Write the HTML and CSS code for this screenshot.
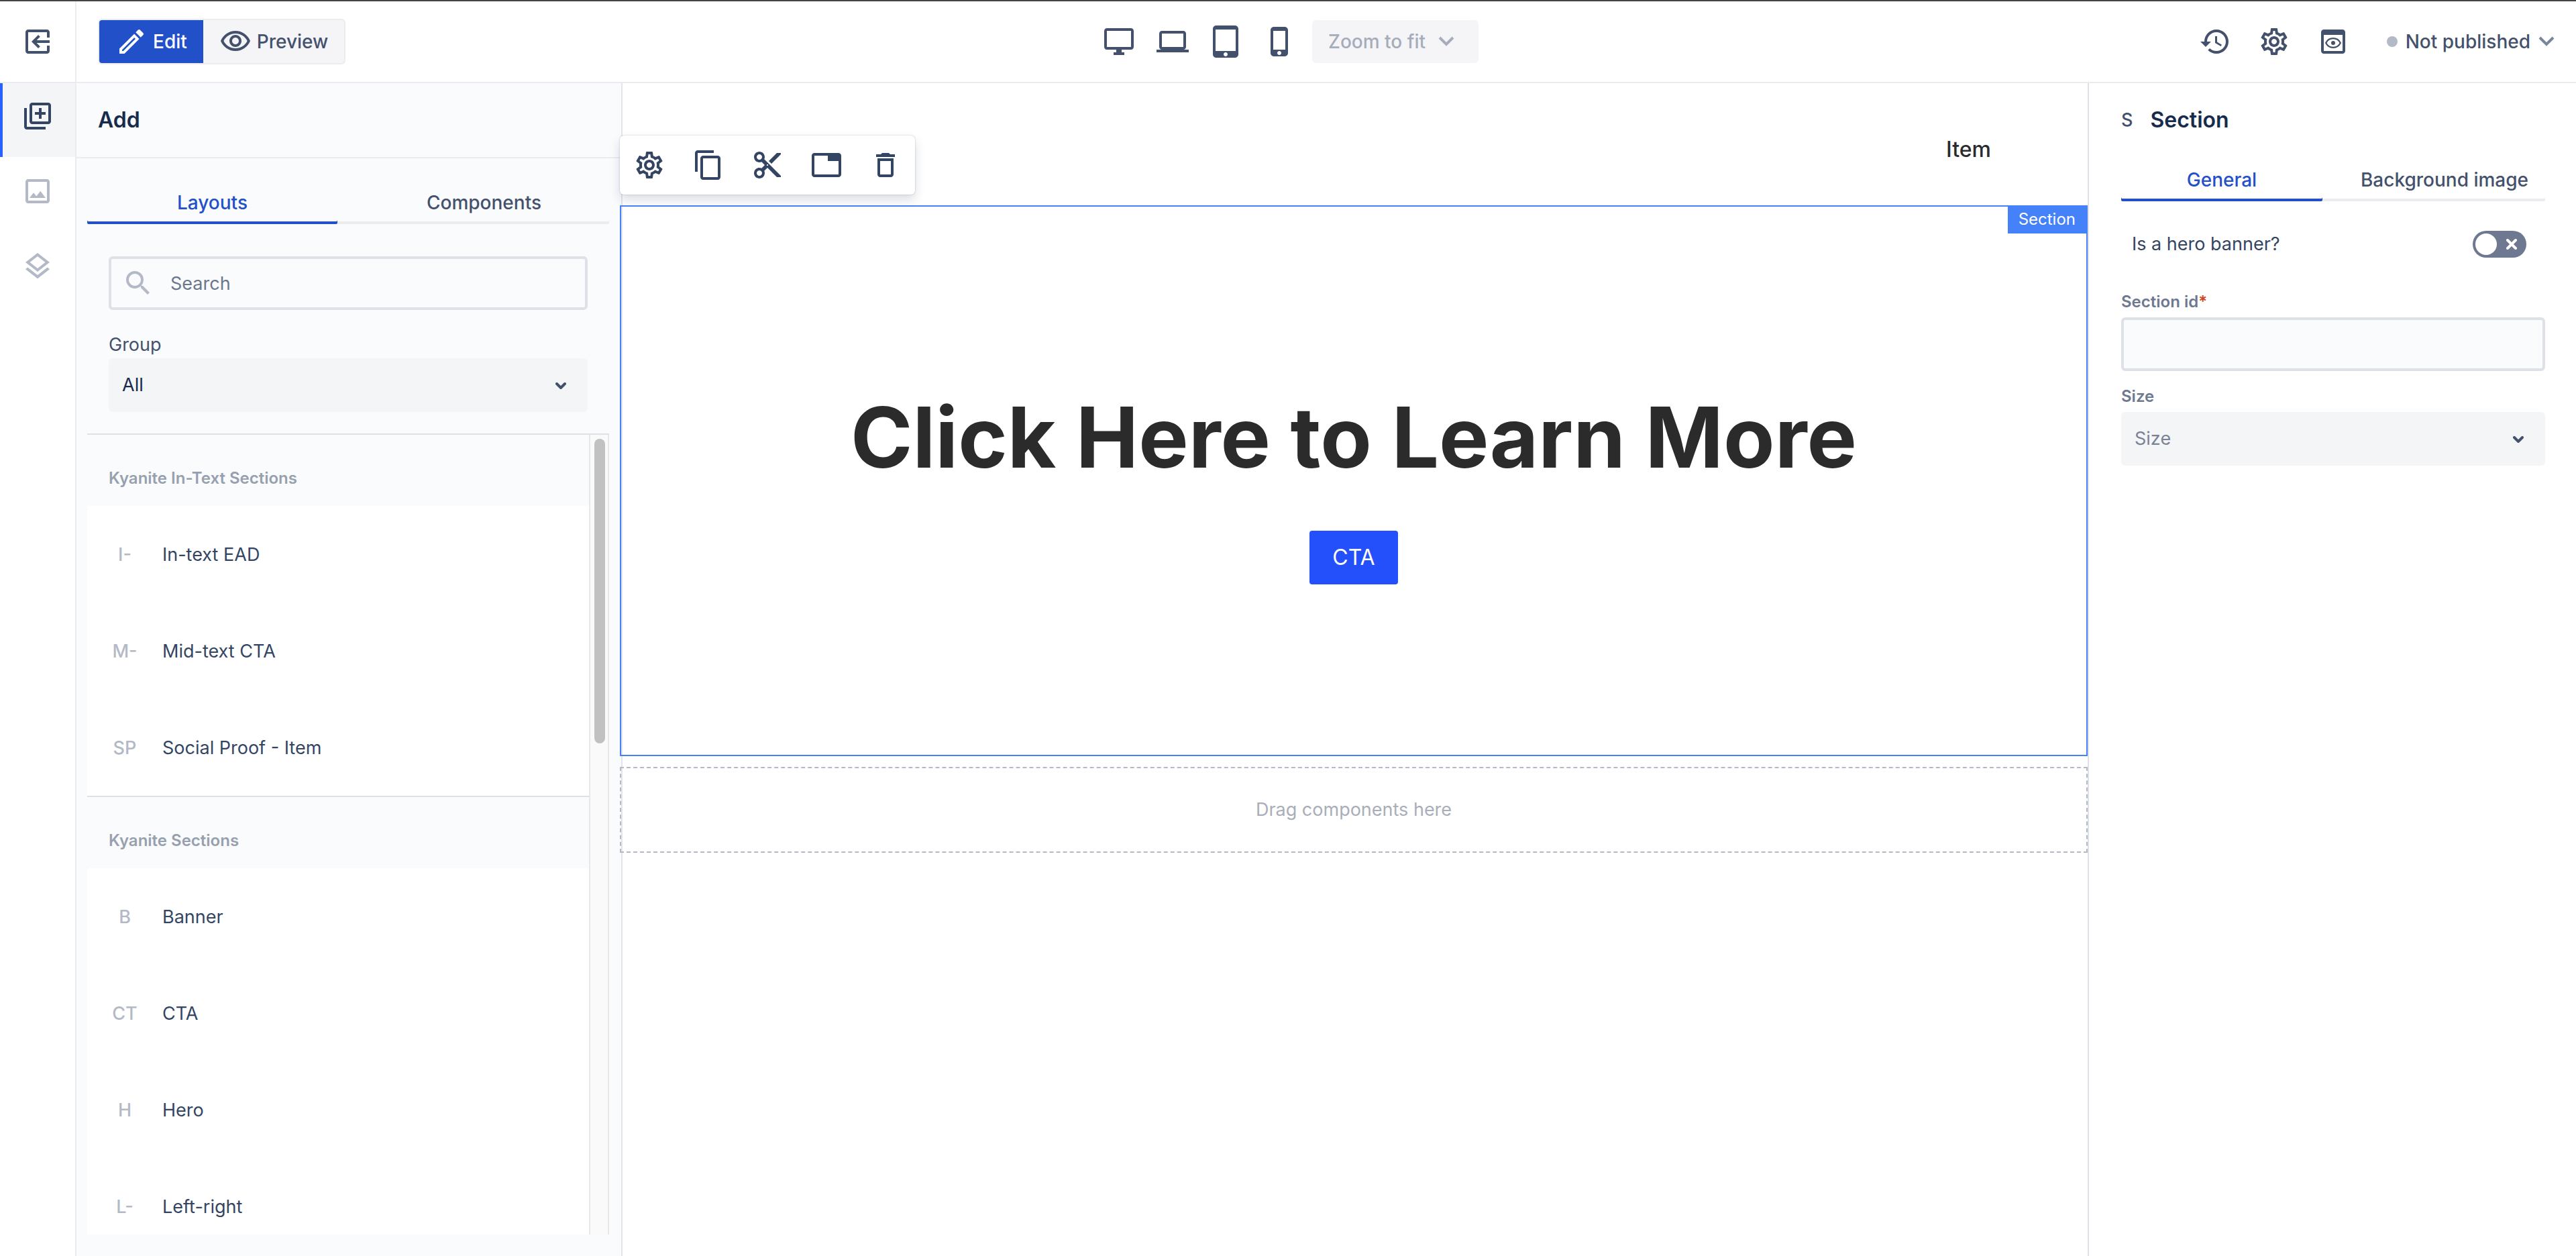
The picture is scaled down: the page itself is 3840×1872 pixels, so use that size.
FILE: index.html
```html
<!DOCTYPE html>
<html lang="en">
<head>
<meta charset="utf-8">
<meta name="viewport" content="width=device-width, initial-scale=1">
<title>Page editor</title>
<link rel="stylesheet" href="styles.css">
</head>
<body>
<svg class="sprite" aria-hidden="true">
  <symbol id="gear" viewBox="0 0 24 24"><path d="M19.43 12.98c.04-.32.07-.64.07-.98 0-.34-.03-.66-.07-.98l2.11-1.65c.19-.15.24-.42.12-.64l-2-3.46c-.09-.16-.26-.25-.44-.25-.06 0-.12.01-.17.03l-2.49 1c-.52-.4-1.08-.73-1.69-.98l-.38-2.65C14.46 2.18 14.25 2 14 2h-4c-.25 0-.46.18-.49.42l-.38 2.65c-.61.25-1.17.59-1.69.98l-2.49-1c-.06-.02-.12-.03-.18-.03-.17 0-.34.09-.43.25l-2 3.46c-.13.22-.07.49.12.64l2.11 1.65c-.04.32-.07.65-.07.98 0 .33.03.66.07.98l-2.11 1.65c-.19.15-.24.42-.12.64l2 3.46c.09.16.26.25.44.25.06 0 .12-.01.17-.03l2.49-1c.52.4 1.08.73 1.69.98l.38 2.65c.03.24.24.42.49.42h4c.25 0 .46-.18.49-.42l.38-2.65c.61-.25 1.17-.59 1.69-.98l2.49 1c.06.02.12.03.18.03.17 0 .34-.09.43-.25l2-3.46c.12-.22.07-.49-.12-.64l-2.11-1.65zm-1.98-1.71c.04.31.05.52.05.73 0 .21-.02.43-.05.73l-.14 1.13.89.7 1.08.84-.7 1.21-1.27-.51-1.04-.42-.9.68c-.43.32-.84.56-1.25.73l-1.06.43-.16 1.13-.2 1.35h-1.4l-.19-1.35-.16-1.13-1.06-.43c-.43-.18-.83-.41-1.23-.71l-.91-.7-1.06.43-1.27.51-.7-1.21 1.08-.84.89-.7-.14-1.13c-.03-.31-.05-.54-.05-.74s.02-.43.05-.73l.14-1.13-.89-.7-1.08-.84.7-1.21 1.27.51 1.04.42.9-.68c.43-.32.84-.56 1.25-.73l1.06-.43.16-1.13.2-1.35h1.39l.19 1.35.16 1.13 1.06.43c.43.18.83.41 1.23.71l.91.7 1.06-.43 1.27-.51.7 1.21-1.07.85-.89.7.14 1.13zM12 8c-2.21 0-4 1.79-4 4s1.79 4 4 4 4-1.79 4-4-1.79-4-4-4zm0 6c-1.1 0-2-.9-2-2s.9-2 2-2 2 .9 2 2-.9 2-2 2z"/></symbol>
  <symbol id="chevron" viewBox="0 0 24 16"><path d="M2 2l10 10L22 2" fill="none" stroke="currentColor" stroke-width="4"/></symbol>
  <symbol id="caret" viewBox="0 0 16 10"><path d="M2 2l6 6 6-6" fill="none" stroke="currentColor" stroke-width="4" stroke-linecap="round" stroke-linejoin="round"/></symbol>
</svg>

<header class="topbar">
  <div class="topbar-left">
    <button class="exit" type="button" aria-label="Exit">
      <svg class="icon" viewBox="0 0 24 24"><g transform="matrix(-1 0 0 1 24 0)"><path d="M10.09 15.59L11.5 17l5-5-5-5-1.41 1.41L12.67 11H3v2h9.67l-2.58 2.59zM19 3H5c-1.11 0-2 .9-2 2v4h2V5h14v14H5v-4H3v4c0 1.1.89 2 2 2h14c1.1 0 2-.9 2-2V5c0-1.1-.9-2-2-2z"/></g></svg>
    </button>
    <div class="mode">
      <button class="mode-button mode-edit" type="button">
        <svg class="icon" viewBox="0 0 24 24"><path d="M14.06 9.02l.92.92L5.92 19H5v-.92l9.06-9.06M17.66 3c-.25 0-.51.1-.7.29l-1.83 1.83 3.75 3.75 1.83-1.83c.39-.39.39-1.02 0-1.41l-2.34-2.34c-.2-.2-.45-.29-.71-.29zm-3.6 3.19L3 17.25V21h3.75L17.81 9.94l-3.75-3.75z"/></svg>
        <span>Edit</span>
      </button>
      <button class="mode-button mode-preview" type="button">
        <svg class="icon" viewBox="0 0 24 24"><path d="M12 6c3.79 0 7.17 2.13 8.82 5.5C19.17 14.87 15.79 17 12 17s-7.17-2.13-8.82-5.5C4.83 8.13 8.21 6 12 6m0-2C7 4 2.73 7.11 1 11.5 2.73 15.89 7 19 12 19s9.27-3.11 11-7.5C21.27 7.11 17 4 12 4zm0 5c1.38 0 2.5 1.12 2.5 2.5S13.38 14 12 14s-2.5-1.12-2.5-2.5S10.62 9 12 9m0-2c-2.48 0-4.5 2.02-4.5 4.5S9.52 16 12 16s4.5-2.02 4.5-4.5S14.48 7 12 7z"/></svg>
        <span>Preview</span>
      </button>
    </div>
  </div>

  <div class="devices">
    <button type="button" aria-label="Desktop"><svg class="icon" viewBox="0 0 24 24"><path d="M21 2H3c-1.1 0-2 .9-2 2v12c0 1.1.9 2 2 2h7v2H8v2h8v-2h-2v-2h7c1.1 0 2-.9 2-2V4c0-1.1-.9-2-2-2zm0 14H3V4h18v12z"/></svg></button>
    <button type="button" aria-label="Laptop"><svg class="icon" viewBox="0 0 24 24"><path d="M20 18c1.1 0 1.99-.9 1.99-2L22 6c0-1.1-.9-2-2-2H4c-1.1 0-2 .9-2 2v10c0 1.1.9 2 2 2H0v2h24v-2h-4zM4 6h16v10H4V6z"/></svg></button>
    <button type="button" aria-label="Tablet"><svg class="icon" viewBox="0 0 24 24"><path d="M18.5 0h-14C3.12 0 2 1.12 2 2.500v19C2 22.880 3.120 24 4.500 24h14c1.380 0 2.500-1.120 2.500-2.500v-19C21 1.120 19.880 0 18.500 0zm-7 23c-.83 0-1.500-.67-1.500-1.500s.67-1.500 1.500-1.500 1.500.67 1.500 1.500-.67 1.500-1.500 1.500zm7.500-4H4V3h15v16z"/></svg></button>
    <button type="button" aria-label="Phone"><svg class="icon" viewBox="0 0 24 24"><path d="M15.500 1h-8C6.120 1 5 2.120 5 3.500v17C5 21.880 6.120 23 7.500 23h8c1.380 0 2.500-1.120 2.500-2.500v-17C18 2.120 16.880 1 15.500 1zm-4 21c-.83 0-1.500-.67-1.500-1.500s.67-1.500 1.500-1.500 1.500.67 1.500 1.500-.67 1.500-1.500 1.500zm4.500-4H7V4h9v14z"/></svg></button>
    <button class="zoom" type="button" disabled><span>Zoom to fit</span><svg class="chevron"><use href="#chevron"/></svg></button>
  </div>

  <div class="topbar-right">
    <button type="button" aria-label="History"><svg class="icon" viewBox="0 0 24 24"><path d="M13 3c-4.970 0-9 4.030-9 9H1l3.890 3.890.07.14L9 12H6c0-3.870 3.130-7 7-7s7 3.130 7 7-3.130 7-7 7c-1.930 0-3.680-.79-4.940-2.060l-1.420 1.420C8.270 19.990 10.510 21 13 21c4.970 0 9-4.030 9-9s-4.030-9-9-9zm-1 5v5l4.280 2.540.72-1.210-3.500-2.080V8H12z"/></svg></button>
    <button type="button" aria-label="Settings"><svg class="icon"><use href="#gear"/></svg></button>
    <button type="button" aria-label="View page"><svg class="icon" viewBox="0 0 24 24"><path fill-rule="evenodd" d="M19 3H5c-1.110 0-2 .9-2 2v14c0 1.100.89 2 2 2h14c1.100 0 2-.9 2-2V5c0-1.100-.89-2-2-2zm0 16H5V7h14v12z"/><circle cx="12" cy="13" r="1.5"/><path d="M6.600 13c1-2 3-3.400 5.400-3.400s4.400 1.400 5.400 3.400c-1 2-3 3.400-5.400 3.400S7.600 15 6.600 13z" fill="none" stroke="currentColor" stroke-width="1.100"/></svg></button>
    <button class="status" type="button"><span class="dot"></span><span>Not published</span><svg class="chevron"><use href="#chevron"/></svg></button>
  </div>
</header>

<div class="workspace">
  <nav class="rail" aria-label="Tools">
    <button class="rail-button rail-active" type="button" aria-label="Add"><svg class="icon" viewBox="0 0 24 24"><path d="M4 6H2v14c0 1.100.9 2 2 2h14v-2H4V6zm16-4H8c-1.100 0-2 .9-2 2v12c0 1.100.9 2 2 2h12c1.100 0 2-.9 2-2V4c0-1.100-.9-2-2-2zm0 14H8V4h12v12zm-7-2h2v-3h3V9h-3V6h-2v3h-3v2h3z"/></svg></button>
    <button class="rail-button" type="button" aria-label="Assets"><svg class="icon" viewBox="0 0 24 24"><path d="M19 5v14H5V5h14m0-2H5c-1.100 0-2 .9-2 2v14c0 1.100.9 2 2 2h14c1.100 0 2-.9 2-2V5c0-1.100-.9-2-2-2zm-4.860 8.860l-3 3.870L9 13.140 6 17h12l-3.860-5.140z"/></svg></button>
    <button class="rail-button" type="button" aria-label="Layers"><svg class="icon" viewBox="0 0 24 24"><path d="M11.990 18.540l-7.370-5.730L3 14.070l9 7 9-7-1.630-1.270-7.380 5.740zM12 16l7.360-5.730L21 9l-9-7-9 7 1.630 1.270L12 16zm0-11.470L17.740 9 12 13.470 6.260 9 12 4.530z"/></svg></button>
  </nav>

  <aside class="library">
    <h2 class="library-title">Add</h2>
    <div class="library-body">
      <div class="tabs" role="tablist">
        <button class="tab tab-active" role="tab" type="button" aria-selected="true">Layouts</button>
        <button class="tab" role="tab" type="button" aria-selected="false">Components</button>
      </div>
      <div class="filters">
        <label class="search">
          <svg class="icon" viewBox="0 0 24 24"><path d="M15.500 14h-.79l-.28-.27A6.471 6.471 0 0 0 16 9.500 6.500 6.500 0 1 0 9.500 16c1.610 0 3.090-.59 4.230-1.570l.27.28v.79l5 4.990L20.490 19l-4.990-5zm-6 0C7.010 14 5 11.990 5 9.500S7.010 5 9.500 5 14 7.010 14 9.500 11.990 14 9.500 14z"/></svg>
          <input type="text" placeholder="Search" aria-label="Search">
        </label>
        <label class="group-label" for="group">Group</label>
        <div class="select">
          <select id="group"><option>All</option></select>
          <svg class="caret"><use href="#caret"/></svg>
        </div>
      </div>
      <div class="scroller">
        <div class="catalog">
          <section class="catalog-group">
            <h3>Kyanite In-Text Sections</h3>
            <ul>
              <li><span class="initials">I-</span>In-text EAD</li>
              <li><span class="initials">M-</span>Mid-text CTA</li>
              <li><span class="initials">SP</span>Social Proof - Item</li>
            </ul>
          </section>
          <section class="catalog-group">
            <h3>Kyanite Sections</h3>
            <ul>
              <li><span class="initials">B</span>Banner</li>
              <li><span class="initials">CT</span>CTA</li>
              <li><span class="initials">H</span>Hero</li>
              <li><span class="initials">L-</span>Left-right</li>
            </ul>
          </section>
        </div>
        <div class="track"><div class="thumb"></div></div>
      </div>
    </div>
  </aside>

  <main class="canvas">
    <div class="site-nav"><a href="#item">Item</a></div>
    <div class="toolbar" role="toolbar" aria-label="Section actions">
      <button type="button" aria-label="Settings"><svg class="icon"><use href="#gear"/></svg></button>
      <button type="button" aria-label="Copy"><svg class="icon" viewBox="0 0 24 24"><path d="M16 1H4c-1.100 0-2 .9-2 2v14h2V3h12V1zm3 4H8c-1.100 0-2 .9-2 2v14c0 1.100.9 2 2 2h11c1.100 0 2-.9 2-2V7c0-1.100-.9-2-2-2zm0 16H8V7h11v14z"/></svg></button>
      <button type="button" aria-label="Cut"><svg class="icon" viewBox="0 0 24 24"><path d="M9.640 7.640c.23-.5.36-1.050.36-1.640 0-2.210-1.790-4-4-4S2 3.790 2 6s1.790 4 4 4c.59 0 1.140-.13 1.640-.36L10 12l-2.360 2.360C7.140 14.130 6.590 14 6 14c-2.210 0-4 1.790-4 4s1.790 4 4 4 4-1.790 4-4c0-.59-.13-1.140-.36-1.640L12 14l7 7h3v-1L9.640 7.640zM6 8c-1.100 0-2-.89-2-2s.9-2 2-2 2 .89 2 2-.9 2-2 2zm0 12c-1.100 0-2-.89-2-2s.9-2 2-2 2 .89 2 2-.9 2-2 2zm6-7.500c-.28 0-.5-.22-.5-.5s.22-.5.5-.5.5.22.5.5-.22.5-.5.5zM19 3l-6 6 2 2 7-7V3z"/></svg></button>
      <button type="button" aria-label="Placeholder"><svg class="icon" viewBox="0 0 24 24"><path d="M21 3H3c-1.100 0-2 .9-2 2v14c0 1.100.9 2 2 2h18c1.100 0 2-.9 2-2V5c0-1.100-.9-2-2-2zm0 16H3V5h10v4h8v10z"/></svg></button>
      <button type="button" aria-label="Delete"><svg class="icon" viewBox="0 0 24 24"><path d="M6 19c0 1.100.9 2 2 2h8c1.100 0 2-.9 2-2V7H6v12zM8 9h8v10H8V9zm7.500-5l-1-1h-5l-1 1H5v2h14V4h-3.500z"/></svg></button>
    </div>
    <section class="selected">
      <span class="tag">Section</span>
      <h1>Click Here to Learn More</h1>
      <a class="cta" href="#cta">CTA</a>
    </section>
    <div class="dropzone">Drag components here</div>
  </main>

  <aside class="properties">
    <h2 class="properties-title"><span class="properties-initial">S</span>Section</h2>
    <div class="tabs" role="tablist">
      <button class="tab tab-active" role="tab" type="button" aria-selected="true">General</button>
      <button class="tab" role="tab" type="button" aria-selected="false">Background image</button>
    </div>
    <label class="toggle-row">
      <span>Is a hero banner?</span>
      <span class="toggle">
        <input type="checkbox" role="switch">
        <svg class="toggle-mark" viewBox="0 0 16 16"><path d="M2 2l12 12M14 2L2 14" fill="none" stroke="currentColor" stroke-width="4" stroke-linecap="round"/></svg>
      </span>
    </label>
    <label class="field-label" for="section-id">Section id<span class="required">*</span></label>
    <input class="text-field" id="section-id" type="text">
    <label class="field-label" for="size">Size</label>
    <div class="select select-empty">
      <select id="size"><option>Size</option></select>
      <svg class="caret"><use href="#caret"/></svg>
    </div>
  </aside>
</div>
</body>
</html>
```

FILE: styles.css
```css
* { box-sizing: border-box; }

body {
  margin: 0;
  min-height: 100vh;
  height: 100vh;
  display: flex;
  flex-direction: column;
  overflow: hidden;
  border-top: 2px solid #444444;
  background: #ffffff;
  color: #344563;
  font-family: Inter, "Liberation Sans", sans-serif;
  font-size: 27px;
  line-height: 40px;
}

h1, h2, h3, ul { margin: 0; padding: 0; }
ul { list-style: none; }

button, input, select { font: inherit; color: inherit; }
button {
  display: flex;
  align-items: center;
  justify-content: center;
  padding: 0;
  border: 0;
  background: none;
}

.sprite { display: none; }
.icon { display: block; flex: none; width: 48px; height: 48px; fill: currentColor; }
.chevron { flex: none; width: 24px; height: 16px; }
.caret { width: 16px; height: 10px; }

/* Top bar */
.topbar {
  flex: none;
  display: grid;
  grid-template-columns: 1fr auto 1fr;
  height: 122px;
  border-bottom: 2px solid #ebecf0;
  color: #44516c;
  font-size: 28px;
  font-weight: 500;
}
.topbar-left { display: flex; align-items: center; gap: 32px; }
.exit { width: 114px; height: 100%; border-right: 2px solid #ebecf0; }
.mode {
  display: flex;
  height: 68px;
  border: 2px solid #ebecf0;
  border-radius: 6px;
  background: #f5f5f8;
  overflow: hidden;
}
.mode-button { gap: 8px; }
.mode-edit { width: 155px; background: #2250c8; color: #ffffff; }
.mode-preview { width: 210px; }
.devices { display: flex; align-items: center; gap: 32px; padding-left: 8px; }
.zoom {
  justify-content: space-between;
  width: 248px;
  height: 64px;
  margin-left: -8px;
  padding: 0 36px 0 24px;
  border-radius: 6px;
  background: #f5f5f8;
  color: #a5adba;
}
.topbar-right {
  display: flex;
  align-items: center;
  justify-content: flex-end;
  gap: 40px;
  padding-right: 32px;
}
.status { margin-left: 16px; gap: 12px; }
.status .chevron { color: #7a869a; }
.dot { width: 16px; height: 16px; border-radius: 50%; background: #b3b9c6; }

/* Workspace columns */
.workspace {
  flex: 1;
  min-height: 0;
  display: grid;
  grid-template-columns: 114px 814px 1fr 728px;
}

.rail {
  display: flex;
  flex-direction: column;
  gap: 2px;
  border-right: 2px solid #ebecf0;
  color: #b3b9c6;
}
.rail-button { height: 110px; padding-bottom: 12px; }
.rail-active { background: #f4f5f7; color: #344563; box-shadow: inset 4px 0 #2962ff; }

/* Library panel */
.library {
  display: flex;
  flex-direction: column;
  min-height: 0;
  border-right: 2px solid #e4e5e9;
  background: #fafbfd;
}
.library-title, .properties-title { color: #172b4d; font-size: 32px; font-weight: 600; }
.library-title {
  flex: none;
  height: 112px;
  padding: 35px 32px;
  border-bottom: 2px solid #ebecf0;
}
.library-body {
  flex: 1;
  display: flex;
  flex-direction: column;
  min-height: 0;
  padding: 40px 18px 32px 16px;
}

.tabs { position: relative; display: flex; gap: 32px; border-radius: 2px; box-shadow: inset 0 -4px #ebecf0; }
.tab {
  flex: 1 1 0;
  height: 58px;
  padding-bottom: 6px;
  color: #44516c;
  font-size: 28px;
  font-weight: 500;
  white-space: nowrap;
}
.tab-active { border-radius: 2px; box-shadow: inset 0 -4px #2250c8; color: #2250c8; }

.filters { display: flex; flex-direction: column; padding: 48px 32px 32px; }
.search {
  display: flex;
  align-items: center;
  gap: 24px;
  height: 80px;
  padding-left: 16px;
  border: 4px solid #dfe1e8;
  border-radius: 6px;
  color: #b3b9c6;
}
.search input { flex: 1; min-width: 0; padding: 2px 0 0; border: 0; outline: 0; background: none; color: #6b778c; }
.search input::placeholder { color: #6b778c; opacity: 1; }
.group-label { padding: 32px 0 0; color: #44516c; }

.select { position: relative; height: 80px; }
.select select {
  appearance: none;
  width: 100%;
  height: 100%;
  padding: 0 20px;
  border: 0;
  border-radius: 6px;
  background: #f4f5f7;
  color: #172b4d;
}
.select .caret { position: absolute; top: 36px; right: 32px; color: #44516c; pointer-events: none; }
.select-empty select { color: #7a8296; }

.scroller {
  flex: 1;
  min-height: 0;
  display: grid;
  grid-template-columns: 1fr 30px;
  border-top: 2px solid #dfe1e8;
}
.catalog { min-height: 0; overflow: hidden; }
.catalog-group { background: #ffffff; }
.catalog-group + .catalog-group { border-top: 2px solid #dfe1e8; }
.catalog-group h3 {
  height: 106px;
  padding: 45px 32px 21px;
  background: #fafbfd;
  color: #97a0af;
  font-size: 24px;
  font-weight: 600;
}
.catalog-group li { display: flex; align-items: center; gap: 24px; height: 144px; padding: 2px 0 0 24px; }
.initials { width: 64px; color: #b3b9c6; font-weight: 500; text-align: center; }
.track {
  padding: 6px;
  border: solid #e8e8e8;
  border-width: 0 2px;
  background: #fafafa;
}
.thumb { width: 16px; height: 38.5%; margin: 0 auto; border-radius: 8px; background: #c1c1c1; }

/* Canvas */
.canvas { position: relative; min-width: 0; }
.site-nav {
  display: flex;
  justify-content: flex-end;
  height: 182px;
  padding: 79px 144px 0 0;
}
.site-nav a { color: #2b2b2b; font-size: 32px; font-weight: 500; text-decoration: none; }
.toolbar {
  position: absolute;
  top: 78px;
  left: -4px;
  display: flex;
  border-radius: 6px;
  background: #ffffff;
  color: #344563;
  box-shadow: 0 0 2px rgba(9, 30, 66, .3), 0 8px 16px rgba(9, 30, 66, .15);
}
.toolbar button { width: 88px; height: 88px; }
.selected {
  position: relative;
  display: flex;
  flex-direction: column;
  align-items: center;
  gap: 63px;
  margin-left: -4px;
  padding: 268px 0 254px;
  border: 2px solid #4581f8;
}
.tag {
  position: absolute;
  top: -2px;
  right: -2px;
  padding: 1px 18px 1px 16px;
  background: #4581f8;
  color: #ffffff;
  font-size: 24px;
}
.selected h1 { color: #2b2b2b; font-size: 125px; font-weight: 700; line-height: 152px; }
.cta {
  padding: 20px 34px;
  border-radius: 4px;
  background: #2450fb;
  color: #ffffff;
  font-size: 32px;
  text-decoration: none;
}
.dropzone {
  display: flex;
  align-items: center;
  justify-content: center;
  height: 128px;
  margin: 16px 0 0 -4px;
  border: 2px dashed #b3b9c6;
  color: #a9aeb9;
}

/* Properties panel */
.properties {
  display: flex;
  flex-direction: column;
  padding: 35px 46px 0 48px;
  border-left: 2px solid #dfe1e8;
}
.properties-title { display: flex; gap: 26px; }
.properties-initial { color: #44516c; font-size: 27px; font-weight: 500; }
.properties .tabs { margin-top: 43px; }
.toggle-row {
  display: flex;
  align-items: center;
  justify-content: space-between;
  height: 80px;
  margin-top: 24px;
  padding: 0 28px 0 16px;
}
.toggle { position: relative; width: 80px; height: 40px; }
.toggle input {
  appearance: none;
  display: block;
  width: 80px;
  height: 40px;
  margin: 0;
  padding: 4px;
  border-radius: 20px;
  background: #6e7890;
}
.toggle input::before { content: ""; display: block; width: 32px; height: 32px; border-radius: 50%; background: #ffffff; }
.toggle-mark { position: absolute; top: 12px; right: 14px; width: 16px; height: 16px; color: #ffffff; pointer-events: none; }
.field-label { margin-top: 18px; padding: 0 0 3px; color: #6e7890; font-size: 24px; font-weight: 600; }
.toggle-row + .field-label { margin-top: 26px; }
.required { color: #d04423; }
.text-field {
  width: 100%;
  height: 80px;
  padding: 0 16px;
  border: 4px solid #dfe1e8;
  border-radius: 6px;
  background: #fafbfd;
}
```
